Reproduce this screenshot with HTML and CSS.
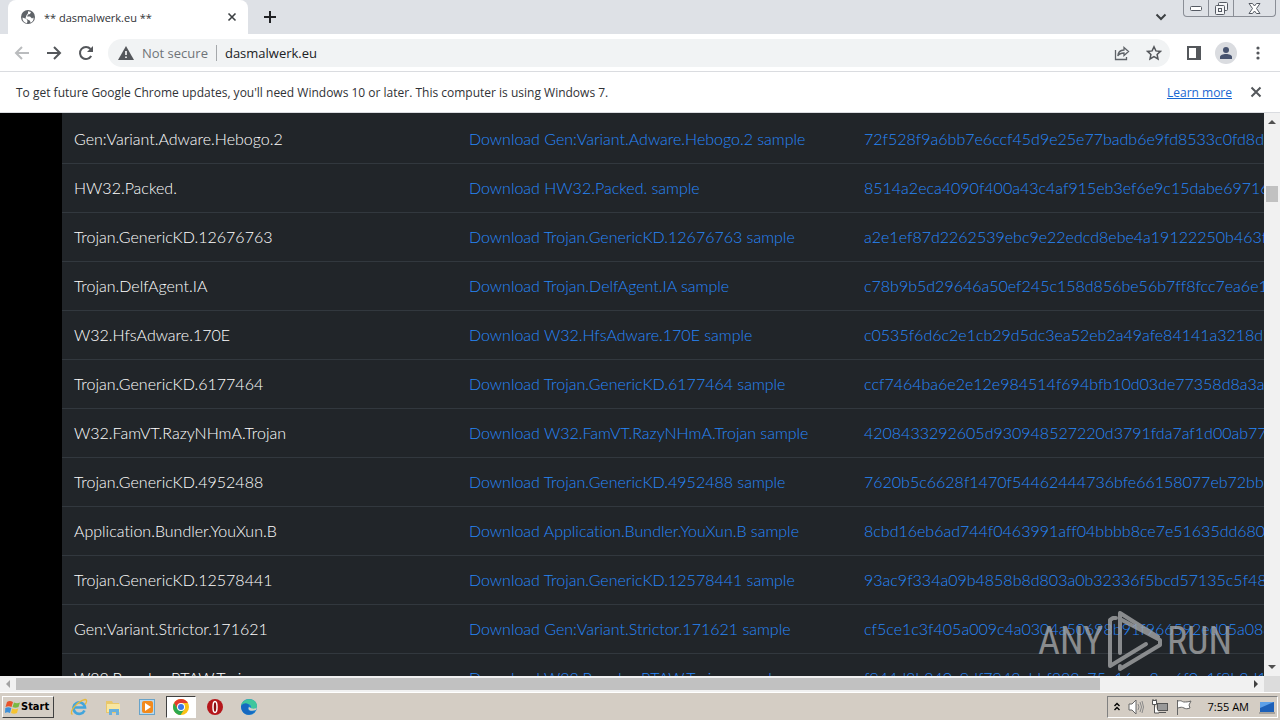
FILE: index.html
```
<!DOCTYPE html>
<html lang="en">
<head>
  <meta charset="UTF-8">
  <meta name="viewport" content="width=device-width, initial-scale=1.0">
  <title>** dasmalwerk.eu **</title>
  <link rel="stylesheet" href="styles.css">
</head>
<body>
  <header class="tab-strip">
    <div class="tab">
      <svg class="globe" viewBox="0 0 16 16" width="16" height="16"><circle cx="8" cy="8" r="7" fill="#5f6368"/><path d="M2.500 8.500l4 1.500 1 2 -.5 2.200C4 13.500 2.200 11.500 2.500 8.500zM8 2.200l3 .8 -1 2 -2 .5 -1 2h3l2 2 1.500-1c.5 2.500-1 4.500-3 5.300l-.5-2 -2-1 -2.500-1.500 1-3 1.500-2z" fill="#fff"/></svg>
      <span class="tab-title">** dasmalwerk.eu **</span>
      <button class="icon-button" aria-label="Close tab"><svg viewBox="0 0 10 10" width="10" height="10"><path d="M1.500 1.500l7 7M8.500 1.500l-7 7" stroke="#3c4043" stroke-width="1.600"/></svg></button>
    </div>
    <button class="icon-button new-tab" aria-label="New tab"><svg viewBox="0 0 12 12" width="12" height="12"><path d="M6 0v12M0 6h12" stroke="#202124" stroke-width="2"/></svg></button>
    <button class="icon-button tab-search" aria-label="Search tabs"><svg viewBox="0 0 12 8" width="12" height="8"><path d="M1.500 1.500L6 6l4.500-4.500" fill="none" stroke="#3c4043" stroke-width="2"/></svg></button>
    <div class="window-controls">
      <button aria-label="Minimize"><svg viewBox="0 0 12 5" width="12" height="5"><rect x=".5" y=".5" width="11" height="4" rx="1" fill="#fff" stroke="#555a63"/></svg></button>
      <button aria-label="Restore"><svg viewBox="0 0 13 13" width="13" height="13"><g fill="#f4f5f7" stroke="#555a63"><rect x="3.500" y=".5" width="9" height="8" rx="1"/><rect x=".5" y="3.500" width="9" height="9" rx="1"/><rect x="3.500" y="6.500" width="3" height="3"/></g></svg></button>
      <button class="close-window" aria-label="Close"><svg viewBox="0 0 13 11" width="13" height="11"><path d="M1 .5h3.500l2 2.500 2-2.500H12L8.500 5.500 12 10.500H8.500l-2-2.500 -2 2.500H1l3.500-5z" fill="#fff" stroke="#555a63"/></svg></button>
    </div>
  </header>

  <nav class="toolbar">
    <button class="icon-button" aria-label="Back"><svg viewBox="0 0 16 16" width="16" height="16"><path d="M15 8H2M8 2L2 8l6 6" fill="none" stroke="#babcbe" stroke-width="2"/></svg></button>
    <button class="icon-button" aria-label="Forward"><svg viewBox="0 0 16 16" width="16" height="16"><path d="M1 8h13M8 2l6 6 -6 6" fill="none" stroke="#54575b" stroke-width="2"/></svg></button>
    <button class="icon-button" aria-label="Reload"><svg viewBox="0 0 16 16" width="16" height="16"><path d="M13.200 11A6 6 0 1 1 12.500 4" fill="none" stroke="#54575b" stroke-width="2"/><path d="M15 1v6H9z" fill="#54575b"/></svg></button>
    <div class="address-bar">
      <svg viewBox="0 0 16 14" width="16" height="14"><path d="M8 0l8 14H0z" fill="#54575b"/><path d="M8 5v4M8 10.500v1.500" stroke="#fff" stroke-width="1.600"/></svg>
      <span class="security">Not secure</span>
      <input class="url" type="text" value="dasmalwerk.eu" aria-label="Address">
      <button class="icon-button" aria-label="Share"><svg viewBox="0 0 16 16" width="16" height="16"><path d="M1.500 5v9.500h11V12M10 2.500l4.500 4L10 10.500V8C7 8 5 9 3.800 11 4 7.500 6.500 5.200 10 5z" fill="none" stroke="#5f6368" stroke-width="1.300"/></svg></button>
      <button class="icon-button star" aria-label="Bookmark"><svg viewBox="0 0 16 16" width="16" height="16"><path d="M8 1.800l1.900 4.100 4.500.5 -3.300 3.100 .9 4.500L8 11.700 4 14l.9-4.500L1.600 6.400l4.500-.5z" fill="none" stroke="#54575b" stroke-width="1.500"/></svg></button>
    </div>
    <button class="icon-button" aria-label="Side panel"><svg viewBox="0 0 14 14" width="14" height="14"><rect x="1" y="1" width="12" height="12" fill="none" stroke="#54575b" stroke-width="2"/><path d="M9 1h4v12H9z" fill="#54575b"/></svg></button>
    <button class="icon-button" aria-label="Profile"><svg viewBox="0 0 22 22" width="22" height="22"><circle cx="11" cy="11" r="11" fill="#dadce0"/><circle cx="11" cy="8" r="3" fill="#47536f"/><path d="M5 17v-2c0-4 12-4 12 0v2z" fill="#47536f"/></svg></button>
    <button class="icon-button" aria-label="Menu"><svg viewBox="0 0 4 14" width="4" height="14"><g fill="#54575b"><circle cx="2" cy="2" r="1.600"/><circle cx="2" cy="7" r="1.600"/><circle cx="2" cy="12" r="1.600"/></g></svg></button>
  </nav>

  <div class="infobar">
    <span>To get future Google Chrome updates, you'll need Windows 10 or later. This computer is using Windows 7.</span>
    <a href="#">Learn more</a>
    <button class="icon-button" aria-label="Dismiss"><svg viewBox="0 0 12 12" width="12" height="12"><path d="M1.500 1.500l9 9M10.500 1.500l-9 9" stroke="#54575b" stroke-width="2"/></svg></button>
  </div>

  <main class="viewport">
    <div class="page">
      <table class="samples">
        <tbody>
          <tr><td>Gen:Variant.Adware.Hebogo.2</td><td><a href="#">Download Gen:Variant.Adware.Hebogo.2 sample</a></td><td><a href="#">72f528f9a6bb7e6ccf45d9e25e77badb6e9fd8533c0fd8da</a></td></tr>
          <tr><td>HW32.Packed.</td><td><a href="#">Download HW32.Packed. sample</a></td><td><a href="#">8514a2eca4090f400a43c4af915eb3ef6e9c15dabe697161</a></td></tr>
          <tr><td>Trojan.GenericKD.12676763</td><td><a href="#">Download Trojan.GenericKD.12676763 sample</a></td><td><a href="#">a2e1ef87d2262539ebc9e22edcd8ebe4a19122250b463fff</a></td></tr>
          <tr><td>Trojan.DelfAgent.IA</td><td><a href="#">Download Trojan.DelfAgent.IA sample</a></td><td><a href="#">c78b9b5d29646a50ef245c158d856be56b7ff8fcc7ea6e12</a></td></tr>
          <tr><td>W32.HfsAdware.170E</td><td><a href="#">Download W32.HfsAdware.170E sample</a></td><td><a href="#">c0535f6d6c2e1cb29d5dc3ea52eb2a49afe84141a3218d7f</a></td></tr>
          <tr><td>Trojan.GenericKD.6177464</td><td><a href="#">Download Trojan.GenericKD.6177464 sample</a></td><td><a href="#">ccf7464ba6e2e12e984514f694bfb10d03de77358d8a3afc</a></td></tr>
          <tr><td>W32.FamVT.RazyNHmA.Trojan</td><td><a href="#">Download W32.FamVT.RazyNHmA.Trojan sample</a></td><td><a href="#">4208433292605d930948527220d3791fda7af1d00ab776</a></td></tr>
          <tr><td>Trojan.GenericKD.4952488</td><td><a href="#">Download Trojan.GenericKD.4952488 sample</a></td><td><a href="#">7620b5c6628f1470f54462444736bfe66158077eb72bb29</a></td></tr>
          <tr><td>Application.Bundler.YouXun.B</td><td><a href="#">Download Application.Bundler.YouXun.B sample</a></td><td><a href="#">8cbd16eb6ad744f0463991aff04bbbb8ce7e51635dd6802</a></td></tr>
          <tr><td>Trojan.GenericKD.12578441</td><td><a href="#">Download Trojan.GenericKD.12578441 sample</a></td><td><a href="#">93ac9f334a09b4858b8d803a0b32336f5bcd57135c5f483</a></td></tr>
          <tr><td>Gen:Variant.Strictor.171621</td><td><a href="#">Download Gen:Variant.Strictor.171621 sample</a></td><td><a href="#">cf5ce1c3f405a009c4a0304a50698b91f966592ed05a0880</a></td></tr>
          <tr><td>W32.Ramdos.PTAW.Trojan</td><td><a href="#">Download W32.Ramdos.PTAW.Trojan sample</a></td><td><a href="#">f944d3b240a9df7942ebbf223a75e16ee2ac6f0e1f9b2d16</a></td></tr>
        </tbody>
      </table>
      <div class="watermark">
        <span>ANY</span>
        <svg viewBox="0 0 56 62" width="56" height="62"><g fill="none" stroke="#a3a5a7" stroke-width="4" stroke-linejoin="round" stroke-linecap="round"><path d="M51 27L13 3v40"/><path d="M9 8H6L3 10v46l36-22"/><path d="M13 56v3l40-24v-5L13 9"/></g></svg>
        <span>RUN</span>
      </div>
    </div>
    <div class="scroll-y">
      <svg viewBox="0 0 8 4" width="8" height="4"><path d="M0 4l4-4 4 4z" fill="#505050"/></svg>
      <div class="thumb"></div>
      <svg viewBox="0 0 8 4" width="8" height="4"><path d="M0 0l4 4 4-4z" fill="#505050"/></svg>
    </div>
    <div class="scroll-x">
      <svg viewBox="0 0 4 8" width="4" height="8"><path d="M4 0L0 4l4 4z" fill="#a3a3a3"/></svg>
      <div class="track"><div class="thumb"></div></div>
      <svg viewBox="0 0 4 8" width="4" height="8"><path d="M0 0l4 4 -4 4z" fill="#404040"/></svg>
    </div>
    <div class="corner"></div>
  </main>

  <footer class="taskbar">
    <button class="start"><svg viewBox="0 0 16 16" width="16" height="16"><path d="M2 3c2-1.500 4-1 6 0L6.500 8c-2-1-4-1-6 0z" fill="#e8532b"/><path d="M9 3.500c2 1 4 1 6 0L13.500 8c-2 1-4 1-6 0z" fill="#79b943"/><path d="M.3 9c2-1 4-1 6 0L5 14c-2-1-3.500-1-5 0z" fill="#3d8fd8"/><path d="M7.200 9.500c2 1 4 1 6 0L12 14c-2 1-4 1-6 0z" fill="#f6c331"/></svg>Start</button>
    <button class="task" aria-label="Internet Explorer"><svg viewBox="0 0 18 18" width="18" height="18"><path d="M14.500 12.500A5.800 5.800 0 1 1 15 9.500H4" fill="none" stroke="#42a5dc" stroke-width="2.600"/><path d="M2.500 16.500C-2 14 8 3 15 1.500c3 0 1 4 0 5" fill="none" stroke="#e6b93b" stroke-width="1.300"/></svg></button>
    <button class="task" aria-label="Explorer"><svg viewBox="0 0 18 18" width="18" height="18"><path d="M2 3h6l1 2h6v10H2z" fill="#e9c76a"/><path d="M3 6h13v8H3z" fill="#f8e6a0"/><path d="M5 17v-6h10v6h-3v-3H8v3z" fill="#69b0dc"/></svg></button>
    <button class="task" aria-label="Media Player"><svg viewBox="0 0 18 18" width="18" height="18"><rect x="1.500" y="1.500" width="15" height="15" fill="#b9d9ee" stroke="#68a3c9"/><rect x="4" y="3" width="11" height="12" rx="2" fill="#f28a1d"/><path d="M7 5l6 4 -6 4z" fill="#fff"/></svg></button>
    <button class="task active" aria-label="Chrome"><svg viewBox="0 0 18 18" width="18" height="18"><circle cx="9" cy="9" r="8" fill="#fbc116"/><path d="M2.100 5A8 8 0 0 1 15.900 5H9L5.500 11z" fill="#e33b2e"/><path d="M2.100 5A8 8 0 0 0 8.500 17L12.500 11H5.500z" fill="#2da94f"/><circle cx="9" cy="9" r="4" fill="#fff"/><circle cx="9" cy="9" r="3" fill="#3b78e7"/></svg></button>
    <button class="task" aria-label="Opera"><svg viewBox="0 0 18 18" width="18" height="18"><circle cx="9" cy="9" r="8" fill="#b5161b"/><ellipse cx="9" cy="9" rx="2" ry="5.500" fill="#8c0b10" stroke="#fff" stroke-width="1.500"/></svg></button>
    <button class="task" aria-label="Edge"><svg viewBox="0 0 18 18" width="18" height="18"><circle cx="9" cy="9" r="8" fill="#1682d2"/><path d="M1 8C2-1 17-1 17 8c0 4-5 4-6 2 1-5-6-5-10-2z" fill="#3fc69d"/><path d="M1 8c3-4 8-3 8 0 -3 3 0 7 6 5 -3 5-13 6-14-5z" fill="#1668c0"/><path d="M9 9c-2 3 2 5 7 3l1-3c-1 2-5 2-6 1z" fill="#d6cfc4"/></svg></button>
    <div class="tray">
      <svg viewBox="0 0 6 10" width="6" height="10"><path d="M.5 4L3 1.500 5.500 4M.5 8L3 5.500 5.500 8" fill="none" stroke="#000" stroke-width="1.400"/></svg>
      <svg viewBox="0 0 16 16" width="16" height="16"><path d="M1 5h3l4-4v14l-4-4H1z" fill="#fff" stroke="#666"/><path d="M10 5q2 3 0 6M12 3q3 5 0 10M14 2q3 6 0 12" fill="none" stroke="#888"/></svg>
      <svg viewBox="0 0 16 16" width="16" height="16"><rect x="5.500" y="4.500" width="10" height="7" fill="#999" stroke="#555"/><path d="M6 13.500h8" stroke="#555"/><path d="M.5 1.500h4v4h-4zM2.500 6v8H7M1 0v2M4 0v2" fill="#fff" stroke="#555"/></svg>
      <svg viewBox="0 0 16 16" width="16" height="16"><path d="M1.500 1v15M2 2c4-1 4 1 6 1s4 0 7-1l-2 4 1 3c-3 1-4 1-6 0s-3-1-6 0" fill="#fff" stroke="#666"/></svg>
      <span class="clock">7:55 AM</span>
      <svg viewBox="0 0 16 14" width="16" height="14"><path d="M1 2l14 0v10H1z" fill="#1d60b8"/><path d="M1 2h14L1 8z" fill="#5da0e8"/><path d="M0 13h16" stroke="#777"/></svg>
    </div>
  </footer>
</body>
</html>
```
FILE: styles.css
```
* {
  box-sizing: border-box;
}

body {
  margin: 0;
  height: 100vh;
  display: flex;
  flex-direction: column;
  overflow: hidden;
  font-family: "Open Sans", "Noto Sans", sans-serif;
  font-size: 12px;
  color: #303236;
  background: #fff;
}

button {
  padding: 0;
  border: none;
  background: none;
  font: inherit;
}

svg {
  display: block;
  flex: none;
}

.icon-button {
  display: flex;
  justify-content: center;
  align-items: center;
  flex: none;
  width: 16px;
  height: 16px;
}

/* tabs */
.tab-strip {
  display: flex;
  align-items: center;
  height: 34px;
  flex: none;
  padding-left: 8px;
  background: #dee1e6;
}

.tab {
  display: flex;
  align-items: center;
  gap: 8px;
  width: 240px;
  height: 34px;
  padding: 0 8px 0 12px;
  border-radius: 8px 8px 0 0;
  background: #fff;
}

.tab-title {
  flex: 1;
  font-size: 11px;
}

.new-tab {
  margin-left: 14px;
}

.tab-search {
  margin-left: auto;
}

.window-controls {
  display: flex;
  align-self: flex-start;
  margin: 0 4px 0 14px;
  border: 1px solid #8a8e96;
  border-top: none;
  border-radius: 0 0 4px 4px;
}

.window-controls button {
  display: flex;
  justify-content: center;
  align-items: center;
  width: 25px;
  height: 16px;
  border-right: 1px solid #8a8e96;
}

.window-controls .close-window {
  width: 41px;
  border-right: none;
}

/* toolbar */
.toolbar {
  display: flex;
  align-items: center;
  gap: 16px;
  height: 38px;
  flex: none;
  padding: 0 14px;
  border-bottom: 1px solid #dadce0;
}

.address-bar {
  display: flex;
  align-items: center;
  flex: 1;
  height: 28px;
  margin-left: -2px;
  padding: 0 8px 0 10px;
  border-radius: 14px;
  background: #f1f3f4;
  font-size: 13px;
}

.security {
  margin-left: 8px;
  padding-right: 8px;
  border-right: 1px solid #a5a8ab;
  line-height: 16px;
  color: #6f7378;
}

.url {
  flex: 1;
  min-width: 0;
  padding: 0 8px;
  border: none;
  background: none;
  font: inherit;
  color: #202124;
}

.star {
  margin-left: 16px;
}

/* update notice */
.infobar {
  display: flex;
  align-items: center;
  height: 41px;
  flex: none;
  padding: 0 16px;
  border-bottom: 1px solid #dadce0;
}

.infobar a {
  margin-left: auto;
  margin-right: 16px;
  color: #1967d2;
}

/* page with its scrollbars */
.viewport {
  display: grid;
  grid-template-columns: minmax(0, 1fr) 16px;
  grid-template-rows: minmax(0, 1fr) 16px;
  flex: 1;
  min-height: 0;
  background: #f1f1f1;
}

.page {
  position: relative;
  overflow: hidden;
  padding-left: 62px;
  background: #000;
}

.samples {
  width: 1500px;
  table-layout: fixed;
  border-collapse: separate;
  border-spacing: 0;
  border-top: 2px solid #212529;
  background: #212529;
  font-family: Lato, sans-serif;
  font-size: 16px;
  font-weight: 300;
  font-variant-ligatures: none;
  line-height: 24px;
  color: #fff;
}

.samples td {
  height: 49px;
  padding: 12px;
  border-bottom: 1px solid #32383e;
  white-space: nowrap;
}

.samples td:nth-child(-n+2) {
  width: 395px;
}

.samples a {
  color: #2787fa;
  text-decoration: none;
}

.watermark {
  position: absolute;
  right: 32px;
  bottom: 4px;
  display: flex;
  align-items: center;
  gap: 4px;
  font-family: "Roboto Condensed", "Liberation Sans Narrow", sans-serif;
  font-size: 38px;
  font-weight: 400;
  line-height: 62px;
  color: #a3a5a7;
  opacity: 0.8;
}

.scroll-y {
  display: flex;
  flex-direction: column;
  align-items: center;
  padding: 7px 0;
}

.scroll-y .thumb {
  width: 12px;
  height: 16px;
  margin: 62px 0 auto;
  background: #c1c1c1;
}

.scroll-x {
  display: flex;
  align-items: center;
  gap: 6px;
  padding: 0 6px;
}

.track {
  flex: 1;
}

.scroll-x .thumb {
  width: 88%;
  height: 12px;
  background: #c1c1c1;
}

.corner {
  background: #dcdcdc;
}

/* taskbar */
.taskbar {
  display: flex;
  align-items: center;
  height: 28px;
  flex: none;
  padding: 2px;
  border-top: 1px solid #fff;
  background: #d4cdc4;
  color: #000;
}

.start {
  display: flex;
  align-items: center;
  width: 52px;
  height: 22px;
  margin-right: 10px;
  padding: 0 2px;
  border: 1px solid;
  border-color: #fff #404040 #404040 #fff;
  font-family: "DejaVu Sans Condensed", "DejaVu Sans", sans-serif;
  font-size: 11px;
  font-weight: bold;
}

.task {
  display: flex;
  justify-content: center;
  align-items: center;
  width: 30px;
  height: 22px;
  margin-right: 4px;
}

.active {
  border: 1px solid;
  border-color: #404040 #fff #fff #404040;
  background: #fff;
}

.tray {
  display: flex;
  align-items: center;
  gap: 8px;
  height: 22px;
  margin-left: auto;
  padding: 0 2px 0 6px;
  border: 1px solid;
  border-color: #808080 #fff #fff #808080;
}

.clock {
  margin: 0 2px 0 8px;
  font-size: 11px;
}
```
